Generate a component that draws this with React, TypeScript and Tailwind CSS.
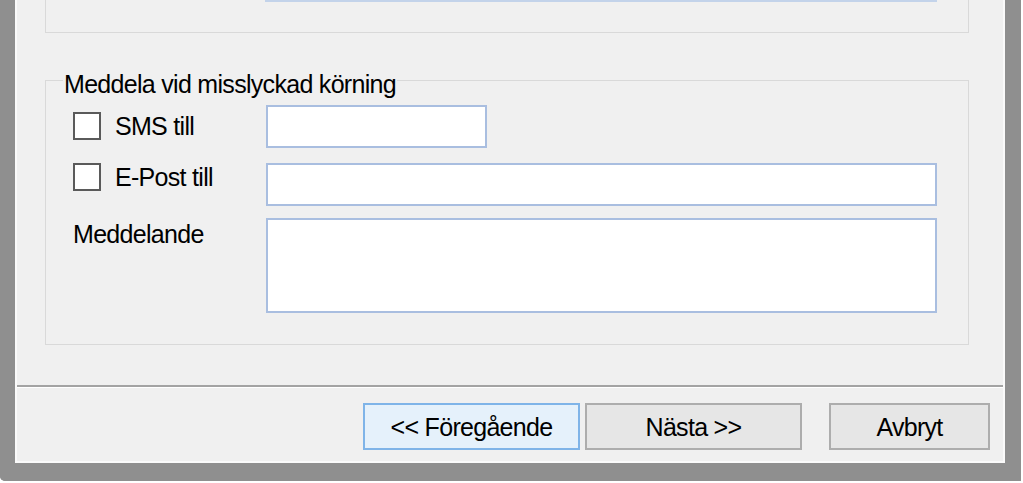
export default function App() {
  const font = { fontFamily: '"Liberation Sans", Arial, sans-serif' }
  const box = "border-2 border-[#a9bee0] bg-white"
  const check = "w-[28px] h-[28px] border-2 border-[#5a5a5a] bg-white shrink-0"
  const txt = "text-[25px] leading-[24px] tracking-[-0.7px]"
  const btn = `h-[47px] border-2 ${txt} text-black`

  return (
    <div className="w-[1023px] h-[483px] bg-white overflow-hidden" style={font}>
      <div className="w-[1021px] h-[481px] border-l-[15px] border-r-[16px] border-b-[18px] border-[#8f8f8f] rounded-bl-[5px]">
        <div className="h-full border-l-2 border-r-2 border-b-2 border-[#fafafa] bg-[#f0f0f0] flex flex-col text-black">
          {/* rest of the group above */}
          <div className="ml-[28px] mr-[34px] h-[33px] border-l border-r border-b border-[#d9d9d9]">
            <div className="ml-[219px] mr-[31px] h-[2px] bg-[#c3d3ea]" />
          </div>

          {/* Meddela vid misslyckad körning */}
          <div className="relative mt-[47px] ml-[28px] mr-[34px] h-[265px] border border-[#d9d9d9] pt-[24px] pl-[27px] pr-[31px] pb-[31px]">
            <span className={`absolute top-[-9px] left-[17px] px-[1px] bg-[#f0f0f0] ${txt}`}>
              Meddela vid misslyckad körning
            </span>

            <div className="flex">
              <div className="w-[193px] pt-[7px] flex items-start">
                <div className="flex items-center">
                  <div className={check} />
                  <span className={`ml-[14px] ${txt}`}>SMS till</span>
                </div>
              </div>
              <div className={`w-[221px] h-[43px] ${box}`} />
            </div>

            <div className="flex mt-[15px]">
              <div className="w-[193px] flex items-start">
                <div className="flex items-center">
                  <div className={check} />
                  <span className={`ml-[14px] ${txt}`}>E-Post till</span>
                </div>
              </div>
              <div className={`flex-1 h-[43px] ${box}`} />
            </div>

            <div className="flex mt-[12px]">
              <div className="w-[193px] pt-[4px]">
                <span className={txt}>Meddelande</span>
              </div>
              <div className={`flex-1 h-[95px] ${box}`} />
            </div>
          </div>

          {/* separator */}
          <div className="mt-[40px] border-t-2 border-[#a3a3a3] border-b border-b-white" />

          {/* buttons */}
          <div className="flex justify-end pt-[15px] pr-[13px] pb-[11px]">
            <button className={`${btn} w-[217px] border-[#7fb4e8] bg-[#e5f1fb]`}>&lt;&lt; Föregående</button>
            <button className={`${btn} w-[217px] ml-[5px] border-[#adadad] bg-[#e6e6e6]`}>Nästa &gt;&gt;</button>
            <button className={`${btn} w-[161px] ml-[27px] border-[#adadad] bg-[#e6e6e6]`}>Avbryt</button>
          </div>
        </div>
      </div>
    </div>
  )
}
